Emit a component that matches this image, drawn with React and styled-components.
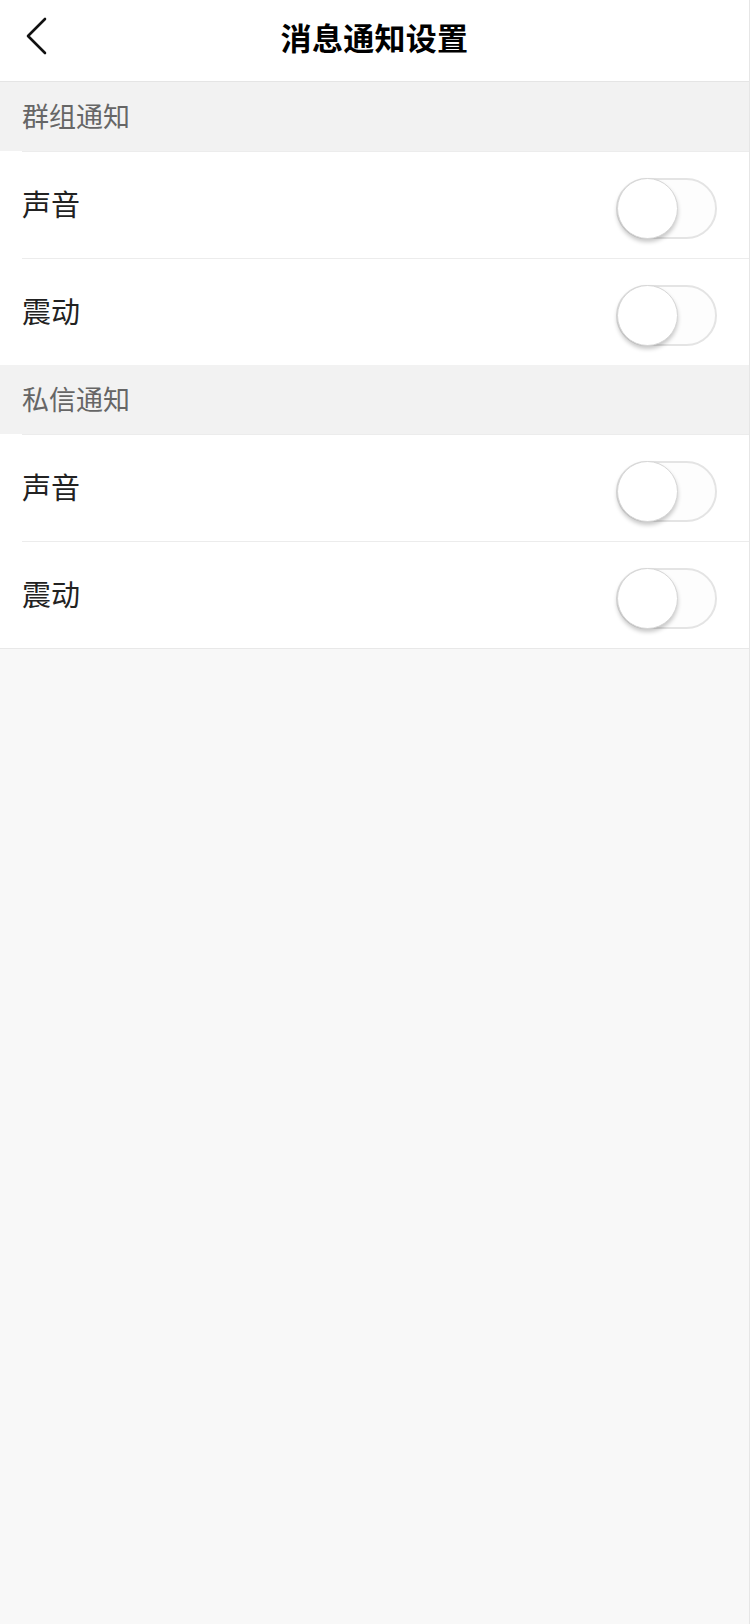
import React, { useState } from "react";
import styled, { createGlobalStyle } from "styled-components";

const GlobalStyle = createGlobalStyle`
  html, body {
    margin: 0;
    padding: 0;
    background: #f8f8f8;
    font-family: "Noto Sans CJK SC", "Noto Sans", "Liberation Sans", sans-serif;
  }
  * {
    box-sizing: border-box;
  }
`;

const sections = [
  { title: "群组通知", items: ["声音", "震动"] },
  { title: "私信通知", items: ["声音", "震动"] },
];

const Switch = ({ on, onToggle }) => (
  <Track on={on} onClick={onToggle}>
    <Knob on={on} />
  </Track>
);

const App = () => {
  const [state, setState] = useState({});

  const toggle = (key) => {
    setState((prev) => ({ ...prev, [key]: !prev[key] }));
  };

  return (
    <>
      <GlobalStyle />
      <Page>
        <Header>
          <BackButton>
            <svg width="24" height="40" viewBox="0 0 24 40">
              <polyline
                points="20,3 3,20 20,37"
                fill="none"
                stroke="#111"
                strokeWidth="2.6"
                strokeLinecap="round"
                strokeLinejoin="round"
              />
            </svg>
          </BackButton>
          <Title>消息通知设置</Title>
        </Header>

        {sections.map((section, sIdx) => (
          <Section key={sIdx}>
            <SectionTitle>{section.title}</SectionTitle>
            <List last={sIdx === sections.length - 1}>
              {section.items.map((label, idx) => {
                const key = `${sIdx}-${idx}`;
                return (
                  <Row key={key}>
                    <Label>{label}</Label>
                    <Switch on={!!state[key]} onToggle={() => toggle(key)} />
                  </Row>
                );
              })}
            </List>
          </Section>
        ))}
      </Page>
    </>
  );
};

const Page = styled.div`
  width: 750px;
  min-height: 1624px;
  background: #f8f8f8;
  border-right: 1px solid #e6e6e6;
`;

const Header = styled.div`
  position: relative;
  height: 82px;
  background: #fff;
  border-bottom: 1px solid #e5e5e5;
  display: flex;
  align-items: center;
  justify-content: center;
`;

// 뒤로가기 화살표
const BackButton = styled.div`
  position: absolute;
  left: 25px;
  top: 16px;
  width: 24px;
  height: 40px;
  cursor: pointer;
`;

const Title = styled.div`
  font-size: 31px;
  font-weight: 700;
  color: #000;
  margin-top: -8px;
  letter-spacing: 0.3px;
`;

const Section = styled.div``;

const SectionTitle = styled.div`
  height: 69px;
  background: #f2f2f2;
  padding-left: 22px;
  padding-bottom: 3px;
  display: flex;
  align-items: center;
  font-size: 27px;
  color: #666;
`;

const List = styled.div`
  background: #fff;
  border-bottom: ${(props) => (props.last ? "1px solid #e8e8e8" : "none")};
`;

const Row = styled.div`
  height: 107px;
  margin-left: 22px;
  padding-right: 32px;
  border-top: 1px solid #ececec;
  display: flex;
  align-items: center;
  justify-content: space-between;
`;

const Label = styled.div`
  font-size: 29px;
  color: #222;
  margin-top: -4px;
`;

const Track = styled.div`
  position: relative;
  width: 101px;
  height: 61px;
  margin-top: 7px;
  border-radius: 31px;
  border: 2px solid #e4e4e4;
  background: ${(props) => (props.on ? "#4cd964" : "#fdfdfd")};
  cursor: pointer;
  transition: background 0.2s;
`;

const Knob = styled.div`
  position: absolute;
  top: -2px;
  left: ${(props) => (props.on ? "39px" : "-1px")};
  width: 61px;
  height: 61px;
  border-radius: 50%;
  background: #fff;
  border: 1px solid #d6d6d6;
  box-shadow: 0 3px 4px rgba(0, 0, 0, 0.22);
  transition: left 0.2s;
`;

export default App;
